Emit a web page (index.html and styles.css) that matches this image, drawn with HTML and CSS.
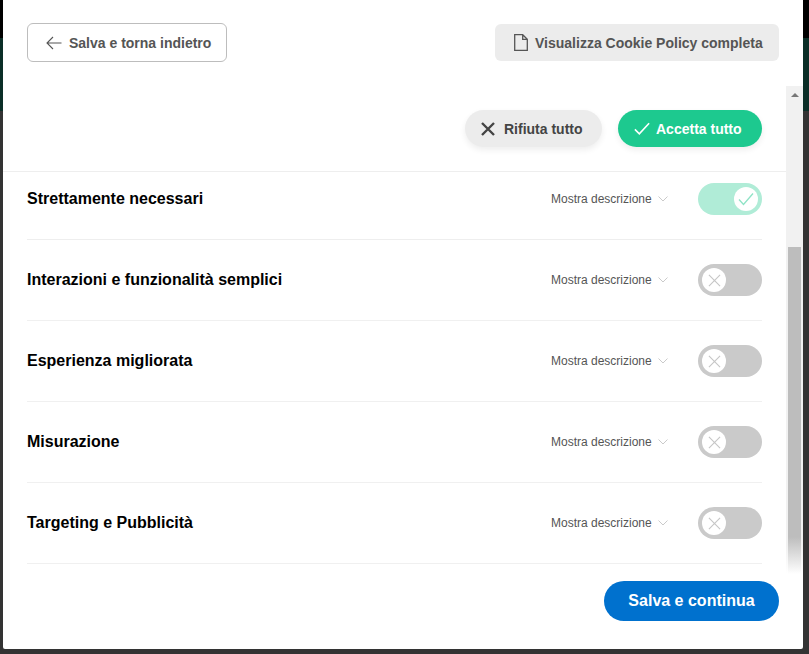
FILE: index.html
```html
<!DOCTYPE html>
<html lang="it">
<head>
<meta charset="utf-8">
<title>Cookie</title>
<link rel="stylesheet" href="styles.css">
</head>
<body>
<div class="modal">
  <header class="top">
    <button class="btn-back">
      <svg class="ic-back" viewBox="0 0 16 14"><path d="M15.500 7H1M7 1 1 7l6 6"/></svg>
      Salva e torna indietro
    </button>
    <button class="btn-policy">
      <svg class="ic-doc" viewBox="0 0 14 17"><path d="M.7.7h8l4.600 4.600v11H.7zM8.700.7v4.600h4.600"/></svg>
      Visualizza Cookie Policy completa
    </button>
  </header>
  <div class="actions">
    <button class="pill pill-grey">
      <svg class="ic-x" viewBox="0 0 14 14"><path d="M1 1l12 12M13 1 1 13"/></svg>
      Rifiuta tutto
    </button>
    <button class="pill pill-green">
      <svg class="ic-ok" viewBox="0 0 18 14"><path d="M1 8l5 5L17 1"/></svg>
      Accetta tutto
    </button>
  </div>
  <div class="list">
    <section class="row row-first">
      <h3>Strettamente necessari</h3>
      <span class="more">Mostra descrizione<svg class="chev" viewBox="0 0 10 6"><path d="M.5.5 5 5 9.500.5"/></svg></span>
      <span class="toggle on"><i class="knob"><svg viewBox="0 0 16 14"><path d="M1 7.500 5.500 12.500 15 1.500"/></svg></i></span>
    </section>
    <section class="row">
      <h3>Interazioni e funzionalità semplici</h3>
      <span class="more">Mostra descrizione<svg class="chev" viewBox="0 0 10 6"><path d="M.5.5 5 5 9.500.5"/></svg></span>
      <span class="toggle"><i class="knob"><svg viewBox="0 0 14 14"><path d="M1 1l12 12M13 1 1 13"/></svg></i></span>
    </section>
    <section class="row">
      <h3>Esperienza migliorata</h3>
      <span class="more">Mostra descrizione<svg class="chev" viewBox="0 0 10 6"><path d="M.5.5 5 5 9.500.5"/></svg></span>
      <span class="toggle"><i class="knob"><svg viewBox="0 0 14 14"><path d="M1 1l12 12M13 1 1 13"/></svg></i></span>
    </section>
    <section class="row">
      <h3>Misurazione</h3>
      <span class="more">Mostra descrizione<svg class="chev" viewBox="0 0 10 6"><path d="M.5.5 5 5 9.500.5"/></svg></span>
      <span class="toggle"><i class="knob"><svg viewBox="0 0 14 14"><path d="M1 1l12 12M13 1 1 13"/></svg></i></span>
    </section>
    <section class="row">
      <h3>Targeting e Pubblicità</h3>
      <span class="more">Mostra descrizione<svg class="chev" viewBox="0 0 10 6"><path d="M.5.5 5 5 9.500.5"/></svg></span>
      <span class="toggle"><i class="knob"><svg viewBox="0 0 14 14"><path d="M1 1l12 12M13 1 1 13"/></svg></i></span>
    </section>
  </div>
  <footer class="bottom">
    <button class="btn-save">Salva e continua</button>
  </footer>
  <div class="scrollbar">
    <span class="arrow"></span>
    <span class="thumb"></span>
  </div>
</div>
</body>
</html>
```
FILE: styles.css
```css
* { box-sizing: border-box; }
html, body { height: 100%; }
body {
  margin: 0;
  height: 654px;
  overflow: hidden;
  padding-left: 3px;
  font-family: "Liberation Sans", Arial, sans-serif;
  background: linear-gradient(#000 0 38px, #0b2e27 38px 111px, #333 111px);
}
button { font-family: inherit; cursor: pointer; }
svg { fill: none; stroke: currentColor; display: block; flex: none; }
.modal {
  position: relative;
  width: 800px;
  height: 649px;
  background: #fff;
  border-radius: 0 0 2px 2px;
  overflow: hidden;
}
.top {
  display: flex;
  justify-content: space-between;
  align-items: center;
  height: 85px;
  padding: 0 24px;
}
.btn-back {
  display: flex;
  align-items: center;
  gap: 7px;
  width: 200px;
  height: 39px;
  padding: 0 0 0 18px;
  border: 1px solid #bdbdbd;
  border-radius: 6px;
  background: #fff;
  color: #555;
  font-size: 14px;
  font-weight: 700;
}
.ic-back { width: 16px; height: 14px; stroke-width: 1.100; }
.btn-policy {
  display: flex;
  align-items: center;
  gap: 7px;
  width: 284px;
  height: 37px;
  padding: 0 0 0 19px;
  border: 0;
  border-radius: 6px;
  background: #ececec;
  color: #555;
  font-size: 14px;
  font-weight: 700;
  white-space: nowrap;
}
.ic-doc { width: 14px; height: 17px; stroke-width: 1.300; }
.actions {
  display: flex;
  justify-content: flex-end;
  gap: 16px;
  height: 87px;
  padding: 25px 41px 0 0;
  border-bottom: 1px solid #eee;
}
.pill {
  display: flex;
  align-items: center;
  height: 37px;
  border: 0;
  border-radius: 19px;
  font-size: 14px;
  font-weight: 700;
  box-shadow: 0 3px 6px rgba(0, 0, 0, .07);
}
.pill-grey {
  width: 137px;
  gap: 9px;
  padding: 0 0 0 16px;
  background: #ececec;
  color: #444;
}
.pill-green {
  width: 144px;
  gap: 6px;
  padding: 0 0 0 16px;
  background: #1dc98f;
  color: #fff;
}
.ic-x { width: 14px; height: 14px; stroke-width: 2.400; }
.ic-ok { width: 16px; height: 13px; stroke-width: 1.800; }
.row {
  display: flex;
  align-items: center;
  height: 81px;
  margin: 0 41px 0 24px;
  border-bottom: 1px solid #f0f0f0;
}
.row-first { height: 68px; padding-bottom: 13px; border-bottom-color: #eee; }
.row h3 {
  flex: 1;
  margin: 0;
  color: #000;
  font-size: 16px;
  font-weight: 700;
}
.more {
  display: flex;
  align-items: center;
  gap: 6px;
  width: 147px;
  color: #555;
  font-size: 12px;
}
.chev { width: 10px; height: 6px; stroke: #c4c4c4; stroke-width: .9; }
.toggle {
  display: flex;
  align-items: center;
  width: 64px;
  height: 32px;
  padding: 0 4px;
  border-radius: 16px;
  background: #cacaca;
}
.toggle.on { justify-content: flex-end; background: #b0ecd7; }
.knob {
  display: flex;
  align-items: center;
  justify-content: center;
  width: 24px;
  height: 24px;
  border-radius: 50%;
  background: #fff;
}
.knob svg { width: 13px; height: 13px; stroke: #c6c6c6; stroke-width: 1.200; }
.on .knob svg { width: 16px; height: 14px; stroke: #8fe3c6; stroke-width: 1.300; }
.bottom {
  display: flex;
  justify-content: flex-end;
  padding: 17px 24px 0 0;
}
.btn-save {
  width: 175px;
  height: 40px;
  border: 0;
  border-radius: 20px;
  background: #0071ce;
  color: #fff;
  font-size: 16px;
  font-weight: 700;
}
.scrollbar {
  position: absolute;
  top: 86px;
  right: 0;
  width: 17px;
  height: 488px;
  background: linear-gradient(#f1f1f1 0 460px, #fff);
}
.arrow {
  position: absolute;
  top: 7px;
  left: 5px;
  border: 4px solid transparent;
  border-top: 0;
  border-bottom: 4px solid #777;
}
.thumb {
  position: absolute;
  top: 161px;
  left: 2px;
  width: 13px;
  height: 327px;
  background: linear-gradient(#bdbdbd 0 290px, #fff);
}
```
